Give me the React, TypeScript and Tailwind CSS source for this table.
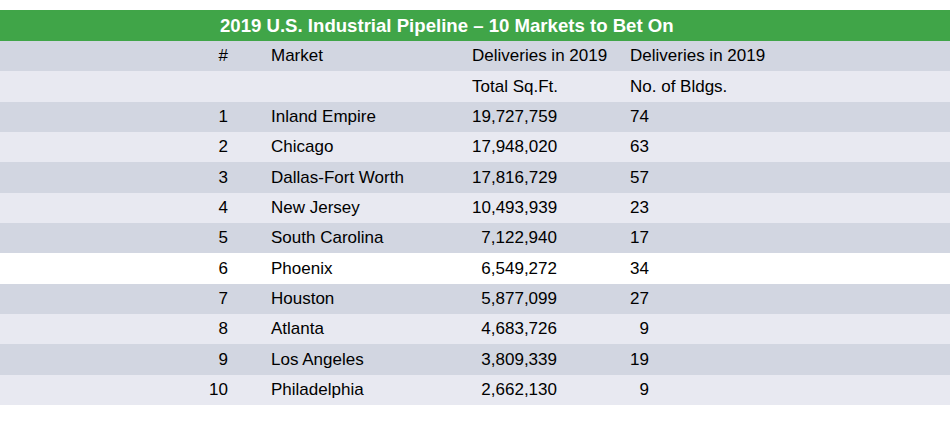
import React from "react";

const rows: [string, string, string, string][] = [
  ["1", "Inland Empire", "19,727,759", "74"],
  ["2", "Chicago", "17,948,020", "63"],
  ["3", "Dallas-Fort Worth", "17,816,729", "57"],
  ["4", "New Jersey", "10,493,939", "23"],
  ["5", "South Carolina", "7,122,940", "17"],
  ["6", "Phoenix", "6,549,272", "34"],
  ["7", "Houston", "5,877,099", "27"],
  ["8", "Atlanta", "4,683,726", "9"],
  ["9", "Los Angeles", "3,809,339", "19"],
  ["10", "Philadelphia", "2,662,130", "9"],
];

const bgs = [
  "bg-[#d2d6e1]",
  "bg-[#e8e9f1]",
  "bg-[#d2d6e1]",
  "bg-[#e8e9f1]",
  "bg-[#d2d6e1]",
  "bg-white",
  "bg-[#d2d6e1]",
  "bg-[#e8e9f1]",
  "bg-[#d2d6e1]",
  "bg-[#e8e9f1]",
];

function Row({
  bg,
  a,
  b,
  c,
  d,
  header,
}: {
  bg: string;
  a: string;
  b: string;
  c: string;
  d: string;
  header?: boolean;
}) {
  return (
    <div className={`flex h-[30.33px] items-center ${bg}`}>
      <div className="w-[228px] shrink-0 text-right">{a}</div>
      <div className="ml-[43px] w-[201px] shrink-0 whitespace-nowrap">{b}</div>
      <div
        className={`w-[85px] shrink-0 whitespace-nowrap ${header ? "text-left" : "text-right"}`}
      >
        {c}
      </div>
      {header ? (
        <div className="ml-[73px] whitespace-nowrap">{d}</div>
      ) : (
        <div className="ml-[73px] w-[19px] shrink-0 text-right">{d}</div>
      )}
    </div>
  );
}

export default function App() {
  return (
    <div
      className="w-[950px] h-[423px] bg-white pt-[10px] text-[17px] text-black"
      style={{ fontFamily: '"Liberation Sans", Arial, sans-serif' }}
    >
      <div className="flex h-[31px] items-center bg-[#40a548] pl-[220px] text-[18.6px] font-bold text-white whitespace-nowrap">
        2019 U.S. Industrial Pipeline – 10 Markets to Bet On
      </div>
      <Row bg="bg-[#d2d6e1]" a="#" b="Market" c="Deliveries in 2019" d="Deliveries in 2019" header />
      <Row bg="bg-[#e8e9f1]" a="" b="" c="Total Sq.Ft." d="No. of Bldgs." header />
      {rows.map((r, i) => (
        <Row key={r[0]} bg={bgs[i]} a={r[0]} b={r[1]} c={r[2]} d={r[3]} />
      ))}
    </div>
  );
}
